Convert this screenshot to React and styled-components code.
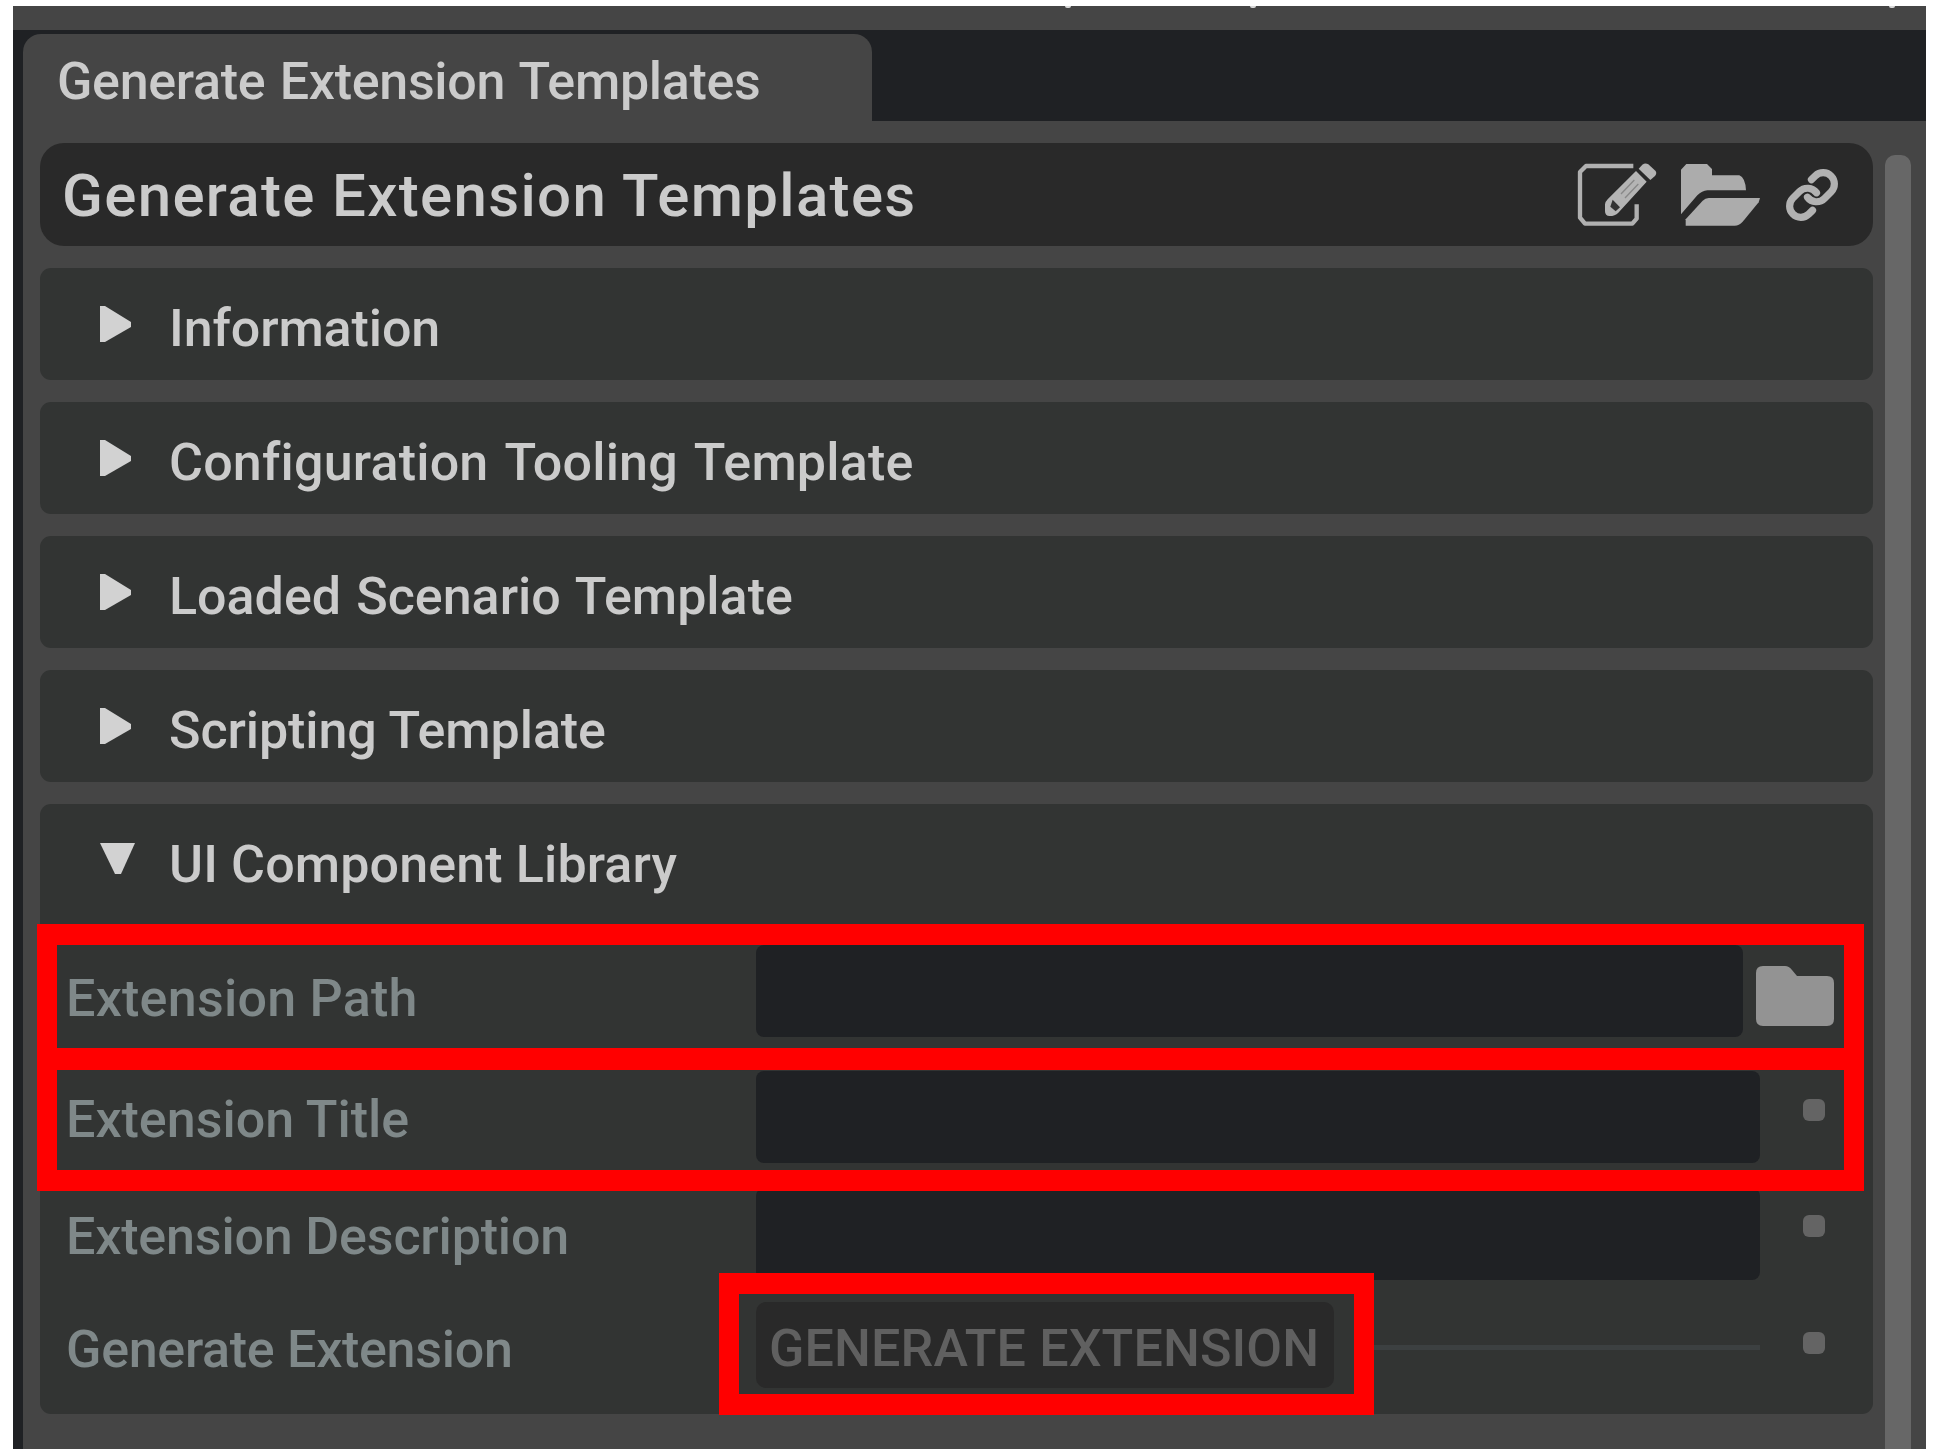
import React from "react";
import styled, { createGlobalStyle } from "styled-components";

const GlobalStyle = createGlobalStyle`
  html, body { margin: 0; background: #fff; }
  body { font-family: Roboto, "Liberation Sans", sans-serif; overflow: hidden; }
  * { box-sizing: border-box; }
`;

const Page = styled.div`
  width: 1938px;
  height: 1452px;
  padding: 6px 12px 3px 13px;
`;

const Window = styled.div`
  display: flex;
  flex-direction: column;
  height: 100%;
  background: #1f2124;
  overflow: hidden;
`;

const TopStrip = styled.div`
  flex: none;
  height: 24px;
  display: flex;
  background: #454545;
`;

const Tick = styled.span`
  width: 6px;
  height: 2px;
  margin-left: ${(p) => p.$gap}px;
  border-radius: 0 0 3px 3px;
  background: #d8d8d8;
`;

const TabBar = styled.div`
  flex: none;
  height: 91px;
  padding: 4px 0 0 10px;
`;

const Tab = styled.div`
  width: 849px;
  height: 87px;
  padding: 5px 0 0 34px;
  border-radius: 18px 18px 0 0;
  background: #454545;
`;

const Text = styled.span`
  display: block;
  white-space: nowrap;
  font-size: ${(p) => p.$size || 52}px;
  line-height: ${(p) => p.$line || 86}px;
  font-weight: 500;
  letter-spacing: ${(p) => p.$track || 0}px;
  word-spacing: ${(p) => p.$word || 0}px;
  color: ${(p) => p.$color || "#cbcbcb"};
`;

const Body = styled.div`
  flex: 1;
  min-height: 0;
  display: flex;
  margin-left: 10px;
  padding: 22px 0 0 17px;
  background: #454545;
`;

const Content = styled.main`
  width: 1833px;
  display: flex;
  flex-direction: column;
  gap: 22px;
`;

const ScrollThumb = styled.div`
  width: 26px;
  margin: 12px 0 0 12px;
  border-radius: 10px 10px 0 0;
  background: #676767;
`;

const Header = styled.header`
  flex: none;
  height: 103px;
  display: flex;
  align-items: center;
  padding: 0 34px 0 22px;
  border-radius: 24px;
  background: #292929;
`;

const HeaderTitle = styled(Text)`
  padding-top: 2px;
`;

const HeaderIcons = styled.div`
  display: flex;
  align-items: center;
  margin-left: auto;
  gap: 24px;
`;

const Section = styled.section`
  flex: none;
  position: relative;
  height: ${(p) => (p.$open ? 610 : 112)}px;
  border-radius: 11px;
  background: #323433;
`;

const SectionHead = styled.div`
  height: 112px;
  display: flex;
  align-items: center;
  padding-left: 60px;
`;

const Marker = styled.svg`
  flex: none;
  width: 36px;
  height: 40px;
  margin-right: 33px;
`;

const SectionTitle = styled(Text)`
  padding-top: 9px;
`;

const Form = styled.div`
  padding-top: 29px;
`;

const Row = styled.div`
  height: ${(p) => p.$h}px;
  display: grid;
  grid-template-columns: 690px 1fr;
  padding-left: 26px;
`;

const Label = styled(Text)`
  padding-top: ${(p) => p.$top}px;
  color: #7f8889;
`;

const Control = styled.div`
  display: flex;
  align-items: flex-start;
`;

const Field = styled.div`
  width: ${(p) => p.$w}px;
  height: 92px;
  border-radius: 8px;
  background: #1f2124;
`;

const Dot = styled.span`
  width: 22px;
  height: 22px;
  margin: ${(p) => p.$top}px 0 0 43px;
  border-radius: 6px;
  background: #646464;
`;

const Button = styled.button`
  width: 578px;
  height: 86px;
  margin: 0;
  padding: 4px 0 0 13px;
  border: 0;
  border-radius: 10px;
  background: #292929;
  font-family: inherit;
  text-align: left;
`;

const Rule = styled.span`
  width: 396px;
  height: 5px;
  margin: 43px 0 0 30px;
  background: #3c4041;
`;

const Highlight = styled.div`
  position: absolute;
  left: ${(p) => p.$x}px;
  top: ${(p) => p.$y}px;
  width: ${(p) => p.$w}px;
  height: ${(p) => p.$h}px;
  border: solid #ff0000;
  border-width: 21px 20px;
  pointer-events: none;
`;

const FolderSlot = styled.span`
  flex: none;
  margin: 20px 0 0 12px;
  line-height: 0;
`;

const EditIcon = () => (
  <svg width="80" height="64" viewBox="114 98 240 192" fill="none">
    <path d="M283 107H141L123 125V262L138 280H280L293 265V222" stroke="#b0b0b0" strokeWidth="13" strokeLinejoin="round" />
    <path d="M291 122L323 154L238 247Q228 257 212 257Q198 257 198 243V222Q199 214 206 207Z" fill="#b4b4b4" />
    <path d="M299 115L310 103Q319 96 328 102L349 121Q355 128 348 137L334 149Z" fill="#b4b4b4" />
    <path d="M221 208L243 231L230 243L214 229Z" fill="#333" />
    <path d="M246 191L286 149M258 203L298 161" stroke="#888" strokeWidth="4" />
  </svg>
);

const OpenFolderIcon = () => (
  <svg width="80" height="64" viewBox="427 98 240 192" fill="#acacac">
    <path d="M427 252V118L443 101H505L520 116V135H602Q620 142 622 180H506Q490 181 476 195Z" />
    <path d="M441 286V267L492 211Q500 203 510 203H664L660 216L612 274Q601 286 588 286Z" />
  </svg>
);

const LinkIcon = () => (
  <svg width="54" height="54" viewBox="0 0 24 24" fill="none" stroke="#b2b2b2" strokeWidth="3.2" strokeLinecap="round" strokeLinejoin="round">
    <path d="M10 13a5 5 0 0 0 7.54.54l3-3a5 5 0 0 0-7.07-7.07l-1.72 1.71" />
    <path d="M14 11a5 5 0 0 0-7.54-.54l-3 3a5 5 0 0 0 7.07 7.07l1.71-1.71" />
  </svg>
);

const FolderIcon = () => (
  <svg width="80" height="62" viewBox="0 0 80 62" fill="#939393">
    <path d="M1 8Q1 1 8 1H30Q34 1 37 5L42 11H72Q79 11 79 18V54Q79 61 72 61H8Q1 61 1 54Z" />
  </svg>
);

const Arrow = ({ open }) => (
  <Marker viewBox="0 0 36 40" fill="#d2d2d2">
    {open ? <path d="M0 3H35L21 34H15Z" /> : <path d="M0 2H5L31 18V23L5 38H0Z" />}
  </Marker>
);

const collapsed = [
  { title: "Information", track: -0.1, word: 0 },
  { title: "Configuration Tooling Template", track: 0.2, word: 4 },
  { title: "Loaded Scenario Template", track: 0, word: 2.2 },
  { title: "Scripting Template", track: -0.08, word: 0 },
];

export default function App() {
  return (
    <Page>
      <GlobalStyle />
      <Window>
        <TopStrip>
          <Tick $gap={1052} />
          <Tick $gap={179} />
          <Tick $gap={633} />
        </TopStrip>
        <TabBar>
          <Tab>
            <Text $track={-0.3} $word={1.8}>Generate Extension Templates</Text>
          </Tab>
        </TabBar>
        <Body>
          <Content>
            <Header>
              <HeaderTitle $size={60} $line={103} $track={1.33}>Generate Extension Templates</HeaderTitle>
              <HeaderIcons>
                <EditIcon />
                <OpenFolderIcon />
                <LinkIcon />
              </HeaderIcons>
            </Header>
            {collapsed.map((s) => (
              <Section key={s.title}>
                <SectionHead>
                  <Arrow />
                  <SectionTitle $track={s.track} $word={s.word}>{s.title}</SectionTitle>
                </SectionHead>
              </Section>
            ))}
            <Section $open>
              <SectionHead>
                <Arrow open />
                <SectionTitle $track={0.13}>UI Component Library</SectionTitle>
              </SectionHead>
              <Form>
                <Row $h={126}>
                  <Label $top={11} $track={0.25}>Extension Path</Label>
                  <Control>
                    <Field $w={987} />
                    <FolderSlot><FolderIcon /></FolderSlot>
                  </Control>
                </Row>
                <Row $h={117}>
                  <Label $top={6}>Extension Title</Label>
                  <Control>
                    <Field $w={1004} />
                    <Dot $top={28} />
                  </Control>
                </Row>
                <Row $h={114}>
                  <Label $top={6} $track={-0.17}>Extension Description</Label>
                  <Control>
                    <Field $w={1004} />
                    <Dot $top={27} />
                  </Control>
                </Row>
                <Row $h={86}>
                  <Label $top={5} $track={-0.29}>Generate Extension</Label>
                  <Control>
                    <Button><Text $color="#606060" $track={0.12}>GENERATE EXTENSION</Text></Button>
                    <Rule />
                    <Dot $top={30} />
                  </Control>
                </Row>
              </Form>
              <Highlight $x={-3} $y={120} $w={1827} $h={146} />
              <Highlight $x={-3} $y={244} $w={1827} $h={143} />
              <Highlight $x={679} $y={469} $w={655} $h={142} />
            </Section>
          </Content>
          <ScrollThumb />
        </Body>
      </Window>
    </Page>
  );
}
